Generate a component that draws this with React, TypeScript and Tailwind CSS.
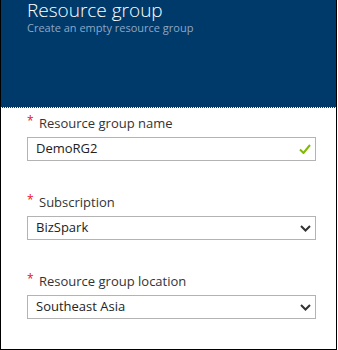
import React from 'react';

const font = { fontFamily: '"Open Sans", "Noto Sans", sans-serif' };

const Chevron = () => (
  <svg width="11" height="7" viewBox="0 0 11 7" className="text-[#333]">
    <path d="M1 1l4.5 4.5L10 1" fill="none" stroke="currentColor" strokeWidth="2" />
  </svg>
);

const Check = () => (
  <svg width="12" height="10" viewBox="0 0 12 10">
    <path d="M1 5.5l3.5 3.5L11 1" fill="none" stroke="#7fba00" strokeWidth="2" />
  </svg>
);

const Label: React.FC<{ text: string }> = ({ text }) => (
  <div className="flex items-start h-[18px] text-[13px] leading-[18px] text-[#333]">
    <span className="text-[#e81123] text-[12px] leading-[12px] mt-[1px] w-[12px]">*</span>
    <span>{text}</span>
  </div>
);

const Field: React.FC<{ value: string; icon: React.ReactNode }> = ({ value, icon }) => (
  <div className="mt-[5px] h-[24px] border border-[#b3b3b3] flex items-center justify-between pl-[8px] pr-[4px] text-[13px] text-[#222]">
    <span>{value}</span>
    {icon}
  </div>
);

export default function App() {
  return (
    <div style={font} className="w-[337px] h-[350px] border-l border-r border-b border-black bg-white overflow-hidden">
      <div className="h-[108px] bg-[#003a6b] border-b border-dotted border-white px-[26px]">
        <div className="text-[19px] font-light leading-[20px] text-white">Resource group</div>
        <div className="text-[11px] leading-[14px] text-[#8ea7c5] mt-[1px]">Create an empty resource group</div>
      </div>
      <div className="pl-[26px] pr-[20px] pt-[6px] flex flex-col">
        <Label text="Resource group name" />
        <Field value="DemoRG2" icon={<Check />} />
        <div className="h-[32px]" />
        <Label text="Subscription" />
        <Field value="BizSpark" icon={<Chevron />} />
        <div className="h-[32px]" />
        <Label text="Resource group location" />
        <Field value="Southeast Asia" icon={<Chevron />} />
      </div>
    </div>
  );
}
